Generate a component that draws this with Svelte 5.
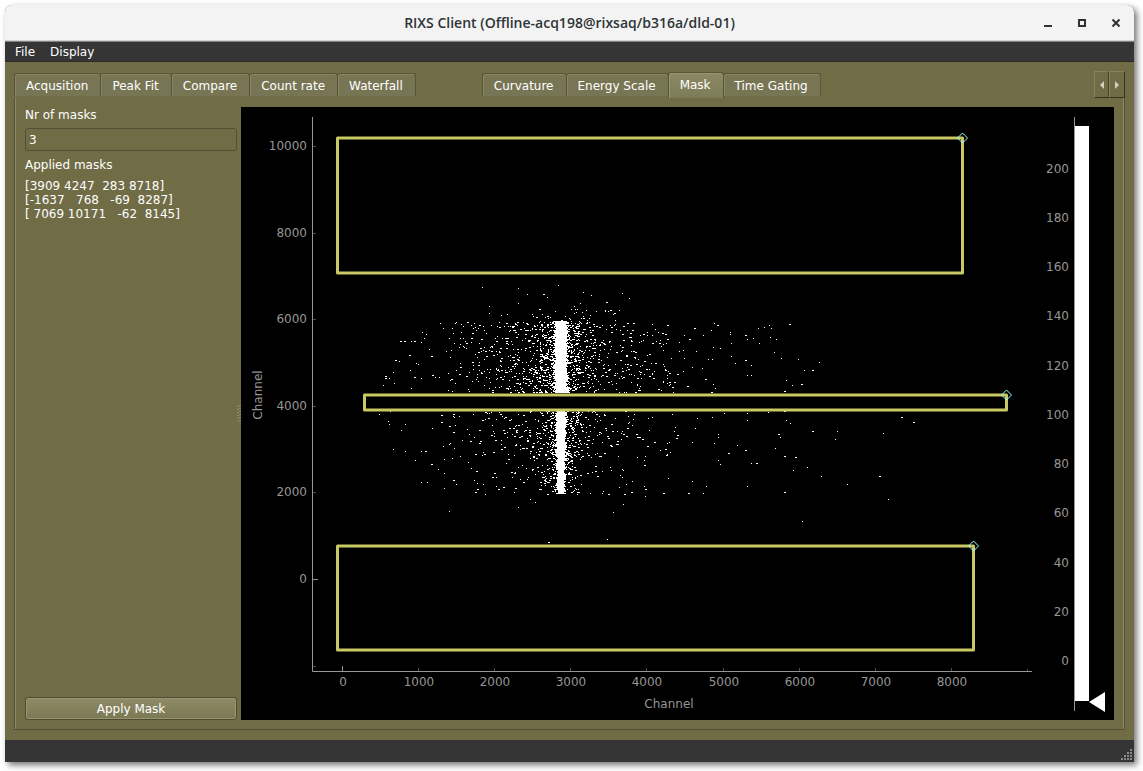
<script>
	const leftTabs = ['Acqusition', 'Peak Fit', 'Compare', 'Count rate', 'Waterfall']
	const rightTabs = ['Curvature', 'Energy Scale', 'Mask', 'Time Gating']

	let active = 'Mask'
	let nrOfMasks = '3'

	// [y0, y1, x0, x1] in channels
	const masks = [
		[3909, 4247, 283, 8718],
		[-1637, 768, -69, 8287],
		[7069, 10171, -62, 8145]
	]
	const maskText = '[3909 4247  283 8718]\n[-1637   768   -69  8287]\n[ 7069 10171   -62  8145]'

	const xTicks = [0, 1000, 2000, 3000, 4000, 5000, 6000, 7000, 8000]
	const yTicks = [0, 2000, 4000, 6000, 8000, 10000]
	const levels = [0, 20, 40, 60, 80, 100, 120, 140, 160, 180, 200]

	const px = (channel) => Math.round(101 + channel * 0.07611)
	const py = (channel) => Math.round(472 - channel * 0.04331)
	const levelY = (level) => Math.round(554 - level * 2.462)

	// stray hits far away from the line: one bin wide
	const singles = [
		[470,223],[473,216],[462,228],[489,225],[489,227],[506,232],[512,231],[517,221],[523,220],[528,218],[530,221],
		[529,230],[535,232],[518,236],[490,236],[472,240],[479,241],[455,244],[467,252],[471,252],[490,249],[494,256],
		[510,258],[506,268],[510,268],[533,245],[540,251],[557,252],[578,255],[563,263],[545,273],[551,278],[451,260],
		[461,261],[472,277],[474,281],[483,306],[471,310],[506,306],[506,313],[527,305],[545,313],[549,316],[642,326],
		[596,324],[594,332],[539,330],[534,341],[477,327],[477,330],[473,336],[496,338],[477,353],[479,357],[510,356],
		[552,363],[566,360],[580,369],[606,377],[647,392],[506,379],[465,379],[462,386],[451,374],[561,414],[451,335],
		[456,311],[454,321],[241,180],[277,181],[286,187],[306,190],[317,178],[342,185],[350,188],[381,186],[388,191],
		[277,196],[248,199],[339,196],[333,199],[248,206],[266,207],[349,208],[199,216],[214,216],[202,221],[220,217],
		[220,225],[181,225],[185,227],[183,231],[180,235],[170,234],[188,242],[205,244],[209,250],[158,254],[175,256],
		[177,257],[169,263],[180,271],[194,270],[198,270],[148,271],[152,265],[153,276],[142,278],[170,281],[138,307],
		[149,304],[147,314],[148,317],[160,323],[164,317],[152,342],[164,344],[180,344],[174,353],[197,362],[203,352],
		[203,366],[180,375],[186,375],[203,381],[215,377],[208,404],[191,321],[202,339],[277,400],[294,395],[289,392],
		[372,405],[382,397],[404,389],[366,432],[236,376],[244,387],[227,355]
	]
	// and two bins wide
	const doubles = [
		[453,221],[476,218],[504,228],[548,217],[504,253],[571,263],[560,277],[543,284],[464,272],[470,285],[543,304],
		[660,310],[672,315],[571,324],[537,327],[504,343],[487,346],[515,356],[543,349],[554,350],[638,369],[543,385],
		[302,187],[365,195],[298,202],[369,203],[159,234],[163,234],[173,234],[168,248],[190,249],[154,253],[173,270],
		[191,268],[144,269],[144,271],[184,344],[190,357],[212,373],[200,308],[200,315],[212,307],[212,325],[229,334],
		[307,435]
	]

	let seed = 198
	function random() {
		seed = (seed * 1664525 + 1013904223) % 4294967296
		return seed / 4294967296
	}

	function cell(x, y, w) {
		return `M${x} ${y}h${w}v1h-${w}z`
	}

	function scatter(count, top, bottom, scale, limitLeft, limitRight, leftShare) {
		let d = ''
		for (let i = 0; i < count; i++) {
			const left = random() < leftShare
			const distance = -Math.log(1 - random()) * scale
			const y = Math.floor(top + random() * (bottom - top))
			const w = random() < 0.35 ? 2 : 1
			if (distance > (left ? limitLeft : limitRight)) continue
			d += cell(Math.round(319 + (left ? -distance : distance)), y, w)
		}
		return d
	}

	function spectrum() {
		let d = ''
		for (const [x, y] of singles) d += cell(x, y, 1)
		for (const [x, y] of doubles) d += cell(x, y, 2)

		// the line itself gets thinner towards low channels
		for (let y = 214; y < 387; y++) {
			if (y > 285 && y < 304) continue
			const half = y < 286 ? 5 : 4 - (y - 304) / 50
			const from = Math.round(320 - half - random() * 3)
			const to = Math.round(320 + half + random() * 3)
			d += cell(from, y, to - from)
		}

		d += scatter(560, 214, 286, 10, 30, 30, 0.5)
		d += scatter(980, 215, 286, 60, 112, 130, 0.56)
		d += scatter(340, 304, 350, 9, 28, 28, 0.5)
		d += scatter(190, 350, 387, 7, 22, 22, 0.5)
		d += scatter(370, 304, 350, 55, 112, 130, 0.54)
		d += scatter(130, 350, 388, 55, 110, 130, 0.5)
		d += scatter(40, 202, 214, 30, 60, 70, 0.4)
		return d
	}

	const hits = spectrum()
</script>

<div class="window">
	<header>
		<h1>RIXS Client (Offline-acq198@rixsaq/b316a/dld-01)</h1>
		<div class="controls">
			<button aria-label="Minimize"><svg width="10" height="10"><path d="M1 8h8" /></svg></button>
			<button aria-label="Maximize"><svg width="10" height="10"><path d="M2 2h6v6h-6z" /></svg></button>
			<button aria-label="Close"><svg width="10" height="10"><path d="M1.500 1.500l7 7M8.500 1.500l-7 7" /></svg></button>
		</div>
	</header>

	<nav class="menu">
		<button>File</button>
		<button>Display</button>
	</nav>

	<main>
		<div class="tabbar">
			<div class="tabs" role="tablist">
				{#each leftTabs as tab}
					<button role="tab" class="tab" aria-selected={active === tab} class:active={active === tab} on:click={() => active = tab}>{tab}</button>
				{/each}
			</div>
			<div class="tabs" role="tablist">
				{#each rightTabs as tab}
					<button role="tab" class="tab" aria-selected={active === tab} class:active={active === tab} on:click={() => active = tab}>{tab}</button>
				{/each}
			</div>
			<div class="scrollers">
				<button aria-label="Scroll tabs left"><svg width="4" height="8"><path d="M4 0v8L0 4z" /></svg></button>
				<button aria-label="Scroll tabs right"><svg width="4" height="8"><path d="M0 0v8l4-4z" /></svg></button>
			</div>
		</div>

		<div class="pane">
			<form class="side" on:submit|preventDefault>
				<label for="nr">Nr of masks</label>
				<input id="nr" type="text" bind:value={nrOfMasks}>
				<h2>Applied masks</h2>
				<pre>{maskText}</pre>
				<button class="apply">Apply Mask</button>
			</form>

			<div class="splitter">
				<svg width="4" height="18"><path d="M1 1v17M3 0v17" /></svg>
			</div>

			<svg class="plot" viewBox="0 0 873 613">
				<path class="hits" d={hits} />

				<g class="axis">
					<path d="M71.500 10V564.500H791" />
					{#each xTicks as tick}
						<path class="tick" class:zero={tick === 0} d="M{px(tick) + 0.5} {tick === 0 ? 559 : 561}V564" />
						<text x={px(tick) + 1} y="579" text-anchor="middle">{tick}</text>
					{/each}
					<path class="tick" d="M{px(9000) + 0.5} 562V564" />
					{#each yTicks as tick}
						<path class="tick" class:zero={tick === 0} d="M72 {py(tick) + 0.5}h{tick === 0 ? 5 : 3}" />
						<text x="66" y={py(tick) + 4} text-anchor="end">{tick}</text>
					{/each}
					<path class="tick" d="M72 {py(-2000) + 0.5}h3" />
					<text x="428" y="601" text-anchor="middle">Channel</text>
					<text transform="translate(21 288) rotate(-90)" text-anchor="middle">Channel</text>
				</g>

				{#each masks as [y0, y1, x0, x1]}
					<rect class="mask" x={px(x0) + 0.5} y={py(y1)} width={px(x1) - px(x0)} height={py(y0) - py(y1)} />
					<path class="handle" d="M{px(x1) + 0.5} {py(y1) - 5}l5 5l-5 5l-5-5z" />
				{/each}

				<g class="axis">
					<path d="M833.500 10V604" />
					{#each levels as level}
						<text x="828" y={levelY(level) + 4} text-anchor="end">{level}</text>
					{/each}
				</g>
				<rect class="bar" x="834" y="19" width="14" height="575" />
				<path class="marker" d="M848 595l16-10v20z" />
			</svg>
		</div>
	</main>

	<footer>
		<svg width="12" height="12">
			{#each [0, 1, 2, 3] as row}
				{#each [0, 1, 2, 3] as col}
					{#if row + col >= 3}
						<rect x={col * 3} y={row * 3} width="2" height="2" />
					{/if}
				{/each}
			{/each}
		</svg>
	</footer>
</div>

<style>
	:global(body) {
		background: #fff;
	}

	.window {
		display: flex;
		flex-direction: column;
		box-sizing: border-box;
		min-height: calc(100vh - 14px);
		margin: 5px 9px 9px 5px;
		border-radius: 7px 7px 0 0;
		background: #706c46;
		color: #fff;
		font: 12px/14px "DejaVu Sans", sans-serif;
		box-shadow: 3px 3px 6px rgba(0, 0, 0, 0.55);
	}

	button, input {
		margin: 0;
		padding: 0;
		border: none;
		background: none;
		color: inherit;
		font: inherit;
	}

	svg {
		display: block;
	}

	header {
		display: grid;
		grid-template-columns: 1fr auto 1fr;
		align-items: center;
		height: 35px;
		background: #f3f3f3;
		border-bottom: 1px solid #d0d0d0;
		border-radius: 7px 7px 0 0;
		color: #2e3436;
	}

	h1 {
		grid-column: 2;
		margin: 0;
		font: 600 14px/20px "Open Sans", sans-serif;
	}

	.controls {
		display: flex;
		justify-content: flex-end;
		gap: 24px;
		padding-right: 13px;
	}

	.controls path {
		fill: none;
		stroke: #2e3436;
		stroke-width: 2;
	}

	.menu {
		display: flex;
		gap: 15px;
		height: 19px;
		padding: 0 10px;
		background: #353535;
		border-top: 1px solid #858580;
		border-bottom: 1px solid #2c2b25;
	}

	main {
		flex: 1;
		display: flex;
		flex-direction: column;
		padding: 9px 9px 10px;
	}

	.tabbar {
		display: flex;
		align-items: flex-end;
		gap: 66px;
		height: 27px;
	}

	.tabs {
		display: flex;
		align-items: flex-end;
		height: 27px;
	}

	.tab {
		box-sizing: border-box;
		height: 23px;
		margin-bottom: 2px;
		padding: 2px 12px 0 11px;
		border: 1px solid #57543a;
		border-bottom: none;
		border-radius: 3px 3px 0 0;
		background: #787554;
		box-shadow: inset 1px 1px #88855f;
		white-space: nowrap;
	}

	.tab + .tab {
		margin-left: -1px;
	}

	.tab.active {
		height: 26px;
		margin-bottom: 0;
		padding-top: 0;
		padding-bottom: 2px;
		background: linear-gradient(#8b8864, #7e7b58);
		box-shadow: inset 1px 1px #99966f;
	}

	.scrollers {
		display: flex;
		margin-left: auto;
	}

	.scrollers button {
		display: grid;
		place-items: center;
		box-sizing: border-box;
		width: 15px;
		height: 27px;
		border: 1px solid #858260;
		border-right-color: #45422b;
		border-bottom: 1px solid #35321f;
	}

	.scrollers button + button {
		width: 16px;
		border-right: 1px solid #35321f;
	}

	.scrollers path {
		fill: #d2d0c0;
	}

	.pane {
		flex: 1;
		display: flex;
		padding: 9px 10px 9px 9px;
		border: 1px solid #535035;
		border-top: none;
		box-shadow: inset 1px 0 #8d8a68, inset -1px 0 #8d8a68;
	}

	.side {
		flex: none;
		display: flex;
		flex-direction: column;
		width: 212px;
		padding-left: 1px;
	}

	.side label {
		margin: 1px 0 6px;
	}

	.side input {
		height: 21px;
		padding: 0 3px;
		border: 1px solid #535035;
		border-radius: 3px;
	}

	h2 {
		margin: 7px 0;
		font: inherit;
	}

	pre {
		margin: 0;
		font: inherit;
	}

	.apply {
		height: 23px;
		margin: auto 0 0;
		border: 1px solid #4f4c33;
		border-radius: 3px;
		background: linear-gradient(#8e8b66, #7b7855);
		box-shadow: inset 0 0 0 1px #99966f;
	}

	.splitter {
		display: flex;
		align-items: center;
		width: 4px;
	}

	.splitter path {
		stroke: #b0ae98;
		stroke-dasharray: 1 2;
	}

	.plot {
		flex: 1;
		min-width: 0;
		background: #000;
	}

	.hits, .bar, .marker {
		fill: #fff;
	}

	.hits {
		shape-rendering: crispEdges;
	}

	.axis path {
		fill: none;
		stroke: #969696;
	}

	.axis .tick {
		stroke: #4c4c4c;
	}

	.axis .zero {
		stroke: #969696;
	}

	.axis text {
		fill: #969696;
	}

	.mask {
		fill: none;
		stroke: #c8c864;
		stroke-width: 3;
		stroke-linejoin: round;
	}

	.handle {
		fill: none;
		stroke: #96ffff;
	}

	footer {
		display: flex;
		align-items: flex-end;
		justify-content: flex-end;
		box-sizing: border-box;
		height: 22px;
		padding: 1px;
		background: #353535;
	}

	footer rect {
		fill: #8a8a8a;
	}
</style>
